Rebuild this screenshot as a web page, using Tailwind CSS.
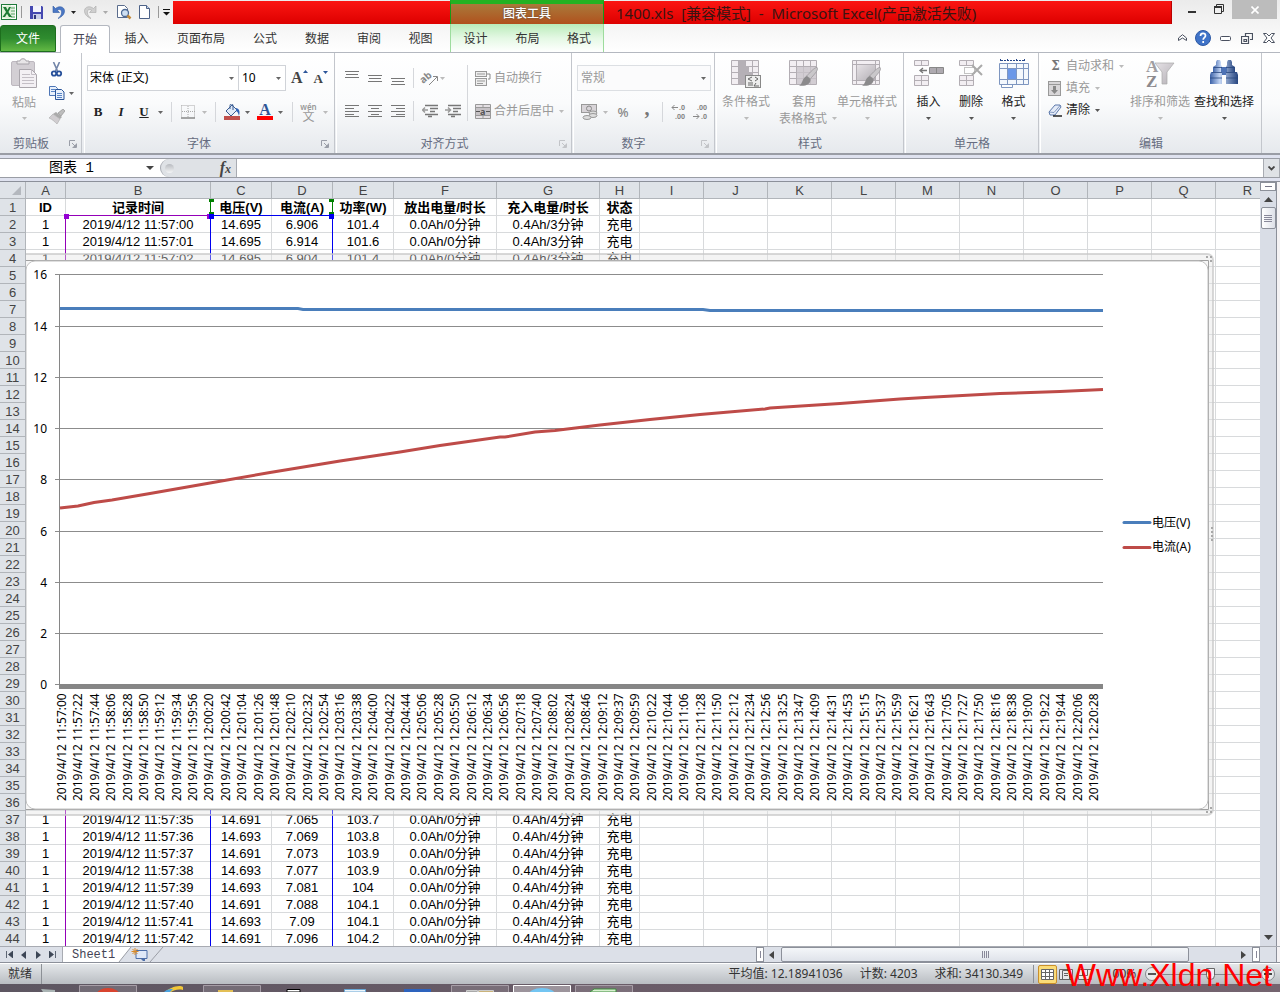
<!DOCTYPE html>
<html lang="zh-CN">
<head>
<meta charset="utf-8">
<title>1400.xls - Microsoft Excel</title>
<script src="https://cdn.jsdelivr.net/npm/@tailwindcss/browser@4"></script>
</head>
<body class="flex h-screen flex-col overflow-hidden bg-[#dfe2e8] font-['Noto_Sans','Noto_Sans_CJK_SC',sans-serif] text-[12px] leading-4 text-[#3b3b3b]">

<svg class="absolute size-0" aria-hidden="true">
  <defs>
    <linearGradient id="gGray" x1="0" y1="0" x2="1" y2="1"><stop offset="0" stop-color="#e6e2e6"/><stop offset="1" stop-color="#b4b0b6"/></linearGradient>
    <linearGradient id="gBin" x1="0" y1="0" x2="1" y2="0"><stop offset="0" stop-color="#3c62a8"/><stop offset=".35" stop-color="#c4d6f4"/><stop offset="1" stop-color="#26457f"/></linearGradient>
    <symbol id="caret" viewBox="0 0 5 3"><path d="M0 0h5L2.5 3z" fill="currentColor"/></symbol>
    <symbol id="launch" viewBox="0 0 8 8"><path d="M.5 6V.5H6" fill="none" stroke="currentColor"/><path d="M3 3l3 3M7.500 3.500v4h-4" stroke="currentColor" fill="none"/><path d="M7 4v3H4z" fill="currentColor"/></symbol>
    <symbol id="brush" viewBox="0 0 22 22"><path d="M20 1c2 3-4 8-7 12l-4-3C13 6 17 1 20 1z" fill="#c9c7ca" stroke="#98969a" stroke-width=".8"/><path d="M9 10l4 3c1 5-5 8-12 7 4-1 3-8 8-10z" fill="#8b8a8c"/></symbol>
  </defs>
</svg>

<!-- Title bar -->
<header class="flex h-[24px] shrink-0 bg-linear-to-b from-[#ebebeb] to-[#f4f4f4]">
  <div class="flex w-[173px] items-center">
    <svg class="ml-px size-4" viewBox="0 0 16 16"><rect x=".5" y=".5" width="15" height="15" fill="#fff" stroke="#1f7a3a"/><path d="M9 2h5v12H9z" fill="#e4f2e4"/><path d="M10 4h4M10 7h4M10 10h4M10 13h4" stroke="#5aa564"/><path d="M1 2l9-1v14l-9-1z" fill="#dff0d8"/><path d="M2 3h3l1.500 3L8 3h2L7.500 8 11 13H8L6 9.800 4 13H1.500L5 8z" fill="#1d7a34"/></svg>
    <span class="ml-[4px] h-3 w-px bg-[#999]"></span>
    <button aria-label="保存" class="ml-[7px]"><svg class="size-[15px]" viewBox="0 0 15 15"><path d="M1 1h12l1 1v12H1z" fill="#4448b0"/><path d="M4 1h8v6H4z" fill="#f3f4fb"/><path d="M4 9h8v5H4z" fill="#c9cfe8"/><path d="M5 10h2v4H5z" fill="#30367c"/></svg></button>
    <button aria-label="撤消" class="ml-[8px]"><svg class="h-[14px] w-[13px]" viewBox="0 0 13 14"><path d="M1 1v6.500h6.500L5.300 5.300C8 3.500 10 5 9.600 8c-.3 2-1.600 4-3.600 5.500C10 12 12.700 9 12.500 5.500 12 1.500 7 .5 3.500 3.500z" fill="#4a77c4" stroke="#2f5aa5" stroke-width=".6"/></svg></button>
    <svg class="ml-[6px] h-[3px] w-[5px] text-[#222]"><use href="#caret"/></svg>
    <button aria-label="恢复" class="ml-[8px]"><svg class="h-[14px] w-[13px]" viewBox="0 0 13 14"><path d="M12 1v6.500H5.500l2.200-2.200C5 3.500 3 5 3.400 8c.3 2 1.600 4 3.600 5.500C3 12 .3 9 .5 5.500 1 1.500 6 .5 9.500 3.500z" fill="#cfcfcf" stroke="#aaa" stroke-width=".6"/></svg></button>
    <svg class="ml-[6px] h-[3px] w-[5px] text-[#aaa]"><use href="#caret"/></svg>
    <button aria-label="打印预览" class="ml-[8px]"><svg class="size-[16px]" viewBox="0 0 16 16"><path d="M1.500 1.500h7l3 3v9h-10z" fill="#fff" stroke="#5a6c8c"/><circle cx="9" cy="9" r="3.500" fill="#cfe0f2" stroke="#4d6a95" stroke-width="1.300"/><path d="M11.500 11.500l3 3" stroke="#c28a3a" stroke-width="2.500"/></svg></button>
    <button aria-label="新建" class="ml-[7px]"><svg class="h-[14px] w-[11px]" viewBox="0 0 11 14"><path d="M.5.5h7l3 3v10H.5z" fill="#fff" stroke="#4d6288"/><path d="M7.500.5v3h3" fill="#c8d4e8" stroke="#4d6288"/></svg></button>
    <span class="ml-[8px] h-3 w-px bg-[#999]"></span>
    <button aria-label="自定义快速访问工具栏" class="ml-[4px]"><svg class="h-[7px] w-[7px]" viewBox="0 0 7 7"><path d="M0 .5h7" stroke="#111"/><path d="M0 3h7L3.500 6.500z" fill="#111"/></svg></button>
  </div>
  <div class="mt-px w-[277px] bg-linear-to-b from-[#fb1512] to-[#dd0000]"></div>
  <div class="flex w-[154px] items-center justify-center border-x border-[#179a17] border-t-4 border-t-[#22b222] bg-linear-to-b from-[#a8793a] to-[#b0501c] font-medium text-white [text-shadow:0_0_2px_#444]">图表工具</div>
  <h1 class="mt-px flex flex-1 items-center overflow-hidden whitespace-pre border-r border-[#b00] bg-linear-to-b from-[#fb1512] to-[#dd0000] pl-[12px] text-[15px] font-normal text-[#3a1412]">1400.xls  [兼容模式]  -  Microsoft Excel(产品激活失败)</h1>
  <div class="flex w-[108px]">
    <button aria-label="最小化" class="flex w-[34px] justify-center pt-[11px] pl-[6px]"><svg class="h-[2px] w-[8px]"><rect width="8" height="2" fill="#333"/></svg></button>
    <button aria-label="还原" class="flex w-[26px] justify-center pt-[4px]"><svg class="size-[10px]" viewBox="0 0 10 10"><path d="M2.500 2V.5h7v7H8M.5 2.500h7v7h-7z" fill="none" stroke="#333"/><path d="M0 3h8" stroke="#333" stroke-width="2"/></svg></button>
    <button aria-label="关闭" class="flex h-[19px] w-[45px] items-center justify-center bg-[#bcbcbc]"><svg class="size-[8px]" viewBox="0 0 8 8"><path d="M.5.5l7 7M7.500.5l-7 7" stroke="#fff" stroke-width="1.600"/></svg></button>
  </div>
</header>

<!-- Ribbon tabs -->
<nav class="flex h-[29px] shrink-0 items-end border-b border-[#b4b8c0] bg-linear-to-b from-[#f4f4f4] to-white text-[#333]">
  <button class="h-[27px] w-[56px] rounded-t-[3px] border border-[#1d6e1d] bg-linear-to-b from-[#247a28] via-[#2f8c2f] to-[#62b944] text-white">文件</button>
  <button class="-mb-px ml-[4px] h-[28px] w-[50px] rounded-t-[3px] border border-b-0 border-[#b4b8c0] bg-white text-[#445]">开始</button>
  <button class="h-[28px] w-[53px] pt-[2px]">插入</button>
  <button class="h-[28px] w-[76px] pt-[2px]">页面布局</button>
  <button class="h-[28px] w-[52px] pt-[2px]">公式</button>
  <button class="h-[28px] w-[52px] pt-[2px]">数据</button>
  <button class="h-[28px] w-[52px] pt-[2px]">审阅</button>
  <button class="h-[28px] w-[51px] pt-[2px]">视图</button>
  <div class="ml-[4px] flex h-[28px] w-[154px] border-x border-[#9ddc9d] bg-linear-to-b from-[#b9ebb9] via-[#e4f8e4] to-white pt-[2px]">
    <button class="w-[49px]">设计</button><button class="w-[55px]">布局</button><button class="w-[48px]">格式</button>
  </div>
  <div class="ml-auto flex h-[28px] items-center gap-[11px] pr-[5px] text-[#4a5160]">
    <button aria-label="功能区最小化"><svg class="h-[8px] w-[9px]" viewBox="0 0 9 8"><path d="M.5 4L4.500.7 8.500 4v2.500L4.500 4 .5 6.500z" fill="#fff" stroke="currentColor"/></svg></button>
    <button aria-label="帮助" class="-ml-[3px]"><svg class="size-4" viewBox="0 0 16 16"><circle cx="8" cy="8" r="7.500" fill="#3f73c8" stroke="#2d59a5"/><path d="M5.500 6c0-3.500 5-3.200 5-.3 0 2-2.300 1.800-2.300 4M8.200 11v2" stroke="#fff" stroke-width="1.700" fill="none"/></svg></button>
    <button aria-label="最小化窗口" class="-ml-[2px]"><svg class="h-[5px] w-[11px]" viewBox="0 0 11 5"><rect x=".5" y=".5" width="10" height="4" rx="1" fill="#fff" stroke="currentColor"/></svg></button>
    <button aria-label="还原窗口" class="-ml-px"><svg class="h-[11px] w-[12px]" viewBox="0 0 12 11"><path d="M4.500 3V.5h7v6H9M.5 3.500h7v7h-7zM3 6.500h2.500v2H3z" fill="none" stroke="currentColor" stroke-width="1.200"/></svg></button>
    <button aria-label="关闭窗口" class="-ml-px"><svg class="h-[10px] w-[12px]" viewBox="0 0 12 10"><path d="M.5.5h3L6 3 8.500.5h3L8 5l3.500 4.500h-3L6 7 3.500 9.500h-3L4 5z" fill="#fff" stroke="currentColor"/></svg></button>
  </div>
</nav>

<!-- Ribbon -->
<div class="flex h-[102px] shrink-0 border-b-2 border-[#9a9da5] bg-linear-to-b from-white via-[#fafbfc] to-[#e6e9ed] text-[#999]">

  <section class="flex w-[82px] flex-col border-r border-[#c3c6cc]">
    <div class="flex flex-1">
      <button class="ml-[8px] flex w-[32px] flex-col items-center pt-[5px]">
        <svg class="h-[32px] w-[28px]" viewBox="0 0 28 32"><rect x="1.500" y="3.500" width="23" height="24" rx="1.500" fill="#d3cfd4" stroke="#bdb8bf"/><path d="M7 6V3h3c0-3 6-3 6 0h3v3z" fill="#e8e6e8" stroke="#a8a4aa"/><path d="M9.500 11.500h12l5 5v13h-17z" fill="#f3f0f4" stroke="#aaa6ac"/><path d="M21.500 11.500v5h5M12 16.500h8M12 19.500h12M12 22.500h12M12 25.500h12" fill="none" stroke="#c4bfc6"/></svg>
        <span class="mt-px leading-[24px]">粘贴</span>
        <svg class="mt-[2px] h-[3px] w-[5px] text-[#bbb]"><use href="#caret"/></svg>
      </button>
      <div class="flex w-[36px] flex-col items-start gap-[9px] pt-[9px] pl-[9px]">
        <button aria-label="剪切"><svg class="h-[15px] w-[16px]" viewBox="0 0 16 15"><path d="M4.500 0l4 9M10.500 0l-4 9" stroke="#7285a8" stroke-width="1.600"/><circle cx="5" cy="11.500" r="2.200" fill="none" stroke="#27509a" stroke-width="1.800"/><circle cx="10" cy="11.500" r="2.200" fill="none" stroke="#27509a" stroke-width="1.800"/></svg></button>
        <button aria-label="复制" class="flex items-center gap-[4px]"><svg class="h-[14px] w-[16px]" viewBox="0 0 16 14"><path d="M.5.5h6l2 2v7h-8z" fill="#e8f0fb" stroke="#4e76b6"/><path d="M6.500 3.500h6l2.500 2.500v7.500H6.500z" fill="#e8f0fb" stroke="#2b5599"/><path d="M2 3.500h4M2 5.500h4M8 7.500h5M8 9.500h5M8 11.500h5" stroke="#5a85c6"/></svg><svg class="h-[3px] w-[5px] text-[#666]"><use href="#caret"/></svg></button>
        <button aria-label="格式刷"><svg class="h-[15px] w-[16px]" viewBox="0 0 16 15"><path d="M14 0l2 2-4 5-3-3z" fill="#bdbdbd" stroke="#888" stroke-width=".6"/><path d="M7 3l6 5-2 2-7-5z" fill="#aaa"/><path d="M4 5l7 5-3 5c-2-2-5-5-8-6z" fill="#d0cdd0" stroke="#aaa" stroke-width=".6"/></svg></button>
      </div>
    </div>
    <div class="flex h-[21px] items-center pt-[2px] text-[#666c80]"><span class="w-[62px] text-center">剪贴板</span><svg class="ml-[7px] size-[8px] text-[#9a9ea8]"><use href="#launch"/></svg></div>
  </section>

  <section class="ml-[2px] flex w-[251px] flex-col border-r border-l border-r-[#c3c6cc] border-l-white pl-[2px]">
    <div class="flex flex-1 flex-col">
      <div class="mt-[12px] flex h-[26px]">
        <label class="relative w-[152px]"><select aria-label="字体" class="h-full w-full appearance-none border border-[#d0d3d8] bg-white pl-[2px] text-black"><option>宋体 (正文)</option></select><svg class="absolute top-[12px] right-[5px] h-[3px] w-[5px] text-[#666]"><use href="#caret"/></svg></label>
        <label class="relative w-[47px]"><select aria-label="字号" class="h-full w-full appearance-none border border-l-0 border-[#d0d3d8] bg-white pl-[3px] text-black"><option>10</option></select><svg class="absolute top-[12px] right-[5px] h-[3px] w-[5px] text-[#666]"><use href="#caret"/></svg></label>
        <button class="ml-[5px] flex font-['Liberation_Serif',serif] text-[16px] leading-[25px] font-bold text-[#444]">A<svg class="mt-[5px] h-[3px] w-[5px]" viewBox="0 0 5 3"><path d="M0 3h5L2.500 0z" fill="#2b5599"/></svg></button>
        <button class="ml-[6px] flex font-['Liberation_Serif',serif] text-[13px] leading-[27px] font-bold text-[#444]">A<svg class="mt-[6px] h-[3px] w-[5px] text-[#2b5599]"><use href="#caret"/></svg></button>
      </div>
      <div class="mt-[8px] flex h-[26px] items-center text-[#666]">
        <button class="w-[22px] font-['Liberation_Serif',serif] text-[13px] font-black text-[#222]">B</button>
        <button class="w-[24px] font-['Liberation_Serif',serif] text-[13px] font-bold text-[#222] italic">I</button>
        <button class="w-[22px] font-['Liberation_Serif',serif] text-[13px] font-bold text-[#222] underline">U</button>
        <svg class="ml-[3px] h-[3px] w-[5px]"><use href="#caret"/></svg>
        <span class="ml-[8px] h-[20px] w-px bg-[#d5d7db]"></span>
        <button aria-label="边框" class="ml-[9px]"><svg class="size-[14px]" viewBox="0 0 14 14"><path d="M.5.5h13v12M.5.5v12M7 1v12M1 6.500h13" fill="none" stroke="#aaa" stroke-dasharray="1 1"/><path d="M0 13h14" stroke="#888" stroke-width="1.500"/></svg></button>
        <svg class="ml-[7px] h-[3px] w-[5px] text-[#bbb]"><use href="#caret"/></svg>
        <span class="ml-[8px] h-[20px] w-px bg-[#d5d7db]"></span>
        <button aria-label="填充颜色" class="ml-[8px]"><svg class="size-[16px]" viewBox="0 0 16 16"><path d="M2 7l6-6 5 5-6 6z" fill="#dfeaf8" stroke="#3b5c92"/><path d="M6 5V1.500a1.500 1.500 0 013 0V6" fill="none" stroke="#3b5c92"/><path d="M12 4c4 1 4 4 3 8-1-3-1-4-3-5z" fill="#2f62b5"/><path d="M0 12h16v4H0z" fill="#c0504d"/></svg></button>
        <svg class="ml-[5px] h-[3px] w-[5px]"><use href="#caret"/></svg>
        <button aria-label="字体颜色" class="ml-[7px] flex w-[16px] flex-col items-center font-['Liberation_Serif',serif] text-[16px] leading-[12px] font-bold text-[#2f5597]">A<span class="h-[4px] w-full bg-[#f00]"></span></button>
        <svg class="ml-[5px] h-[3px] w-[5px]"><use href="#caret"/></svg>
        <span class="ml-[9px] h-[20px] w-px bg-[#d5d7db]"></span>
        <button class="ml-[7px] flex w-[17px] flex-col items-center text-[#999]"><span class="text-[8px] leading-[9px] font-semibold">wén</span><span class="text-[12px] leading-[12px]">文</span></button>
        <svg class="ml-[6px] h-[3px] w-[5px] text-[#bbb]"><use href="#caret"/></svg>
      </div>
    </div>
    <div class="flex h-[21px] items-center pt-[2px] text-[#666c80]"><span class="w-[224px] text-center">字体</span><svg class="ml-[10px] size-[8px] text-[#9a9ea8]"><use href="#launch"/></svg></div>
  </section>

  <section class="ml-px flex w-[236px] flex-col border-r border-l border-r-[#c3c6cc] border-l-white pl-[8px]">
    <div class="flex flex-1">
      <div class="flex flex-col gap-[7px] pt-[12px]">
        <div class="flex h-[26px] items-center text-[#777]">
          <button aria-label="顶端对齐" class="mb-[6px]"><svg class="h-[9px] w-[14px]" viewBox="0 0 14 9"><path d="M0 .5h14M1 3.500h12M0 6.500h14" stroke="currentColor" stroke-width="1.200"/></svg></button>
          <button aria-label="垂直居中" class="mt-px ml-[9px]"><svg class="h-[9px] w-[14px]" viewBox="0 0 14 9"><path d="M0 1.500h14M1 4.500h12M0 7.500h14" stroke="currentColor" stroke-width="1.200"/></svg></button>
          <button aria-label="底端对齐" class="mt-[7px] ml-[9px]"><svg class="h-[9px] w-[14px]" viewBox="0 0 14 9"><path d="M0 1.500h14M1 4.500h12M0 7.500h14" stroke="currentColor" stroke-width="1.200"/></svg></button>
          <span class="ml-[8px] h-[20px] w-px bg-[#d5d7db]"></span>
          <button aria-label="方向" class="ml-[8px]"><svg class="h-[16px] w-[16px] overflow-visible" viewBox="0 0 16 16"><text x="0" y="13" font-size="10" font-weight="bold" fill="#888" transform="rotate(-40 2 12)">ab</text><path d="M7 15l8-8M15.500 11V6.500H11" stroke="#888" fill="none"/></svg></button>
          <svg class="ml-[2px] h-[3px] w-[5px] text-[#bbb]"><use href="#caret"/></svg>
        </div>
        <div class="flex h-[26px] items-center text-[#777]">
          <button aria-label="左对齐"><svg class="h-[12px] w-[14px]" viewBox="0 0 14 12"><path d="M0 .5h14M0 3.500h9M0 6.500h14M0 9.500h9M0 11.500h14" stroke="currentColor" stroke-width="1.200"/></svg></button>
          <button aria-label="居中" class="ml-[9px]"><svg class="h-[12px] w-[14px]" viewBox="0 0 14 12"><path d="M0 .5h14M3 3.500h8M0 6.500h14M3 9.500h8M0 11.500h14" stroke="currentColor" stroke-width="1.200"/></svg></button>
          <button aria-label="右对齐" class="ml-[9px]"><svg class="h-[12px] w-[14px]" viewBox="0 0 14 12"><path d="M0 .5h14M5 3.500h9M0 6.500h14M5 9.500h9M0 11.500h14" stroke="currentColor" stroke-width="1.200"/></svg></button>
          <span class="ml-[8px] h-[20px] w-px bg-[#d5d7db]"></span>
          <button aria-label="减少缩进量" class="ml-[8px]"><svg class="h-[14px] w-[16px]" viewBox="0 0 16 14"><path d="M3 1.500h13M8 4.500h8M8 7.500h5M3 10.500h13M6 12.500h4" stroke="currentColor" stroke-width="1.500"/><path d="M6 6H1M3 3.500L.5 6 3 8.500" stroke="#999" fill="none" stroke-width="1.500"/></svg></button>
          <button aria-label="增加缩进量" class="ml-[7px]"><svg class="h-[14px] w-[16px]" viewBox="0 0 16 14"><path d="M3 1.500h13M8 4.500h8M8 7.500h5M3 10.500h13M6 12.500h4" stroke="currentColor" stroke-width="1.500"/><path d="M0 6h5M3 3.500L5.500 6 3 8.500" stroke="#999" fill="none" stroke-width="1.500"/></svg></button>
        </div>
      </div>
      <span class="mt-[12px] ml-[6px] h-[56px] w-px bg-[#d5d7db]"></span>
      <div class="flex flex-col gap-[7px] pt-[12px] pl-[7px]">
        <button class="flex h-[26px] items-center"><svg class="h-[15px] w-[16px]" viewBox="0 0 16 15"><rect x=".5" y=".5" width="11" height="5" fill="#eee" stroke="#999"/><rect x=".5" y="7.500" width="11" height="7" fill="#eee" stroke="#999"/><path d="M2 3h8M2 10h8M2 12.500h6" stroke="#999"/><path d="M12 3h3v5h-2" fill="none" stroke="#888"/></svg><span class="ml-[3px]">自动换行</span></button>
        <button class="flex h-[26px] items-center"><svg class="h-[15px] w-[16px]" viewBox="0 0 16 15"><path d="M.5.5h15v14H.5zM8 .5V4M8 11v3.500M.5 3.500h15M.5 11.500h15" fill="#e4e0e4" stroke="#999"/><path d="M1 4h14v7H1z" fill="#c6c2c6"/><path d="M1 7.500h4M11 7.500h4" stroke="#555"/><text x="5" y="10.500" font-size="9" font-weight="bold" fill="#555">a</text></svg><span class="ml-[3px]">合并后居中</span><svg class="ml-[5px] h-[3px] w-[5px] text-[#bbb]"><use href="#caret"/></svg></button>
      </div>
    </div>
    <div class="flex h-[21px] items-center pt-[2px] text-[#666c80]"><span class="w-[199px] text-center">对齐方式</span><svg class="ml-[15px] size-[8px] text-[#c2c4c8]"><use href="#launch"/></svg></div>
  </section>

  <section class="ml-px flex w-[142px] flex-col border-r border-l border-r-[#c3c6cc] border-l-white pl-[3px]">
    <div class="flex flex-1 flex-col">
      <label class="relative mt-[12px] block h-[26px] w-[134px]"><select aria-label="数字格式" class="h-full w-full appearance-none border border-[#dcdfe3] bg-[#fbfbfc] pl-[3px] text-[#999]"><option>常规</option></select><svg class="absolute top-[12px] right-[5px] h-[3px] w-[5px] text-[#666]"><use href="#caret"/></svg></label>
      <div class="mt-[8px] flex h-[26px] items-center">
        <button aria-label="会计数字格式" class="ml-[4px]"><svg class="h-[16px] w-[17px]" viewBox="0 0 17 16"><rect x=".5" y=".5" width="15" height="8" fill="#d8d4d8" stroke="#999"/><circle cx="8" cy="4.500" r="2.500" fill="none" stroke="#888"/><ellipse cx="12" cy="9" rx="4" ry="2" fill="#ddd" stroke="#999"/><ellipse cx="12" cy="11.500" rx="4" ry="2" fill="#ddd" stroke="#999"/><ellipse cx="6" cy="13.500" rx="4" ry="2" fill="#ddd" stroke="#999"/></svg></button>
        <svg class="ml-[5px] h-[3px] w-[5px] text-[#bbb]"><use href="#caret"/></svg>
        <button class="ml-[8px] w-[14px] text-[13px] font-medium text-[#888]">%</button>
        <button class="ml-[10px] w-[14px] pb-[9px] font-['Liberation_Serif',serif] text-[20px] leading-4 font-bold text-[#777]">,</button>
        <span class="ml-[8px] h-[20px] w-px bg-[#d5d7db]"></span>
        <button aria-label="增加小数位数" class="ml-[8px]"><svg class="h-[20px] w-[16px] overflow-visible" viewBox="0 0 16 20" font-size="7" font-weight="bold" fill="#888"><path d="M7 5.500H1M3.500 3L1 5.500 3.500 8" stroke="#888" fill="none"/><text x="8" y="8">.0</text><text x="4" y="17">.00</text></svg></button>
        <button aria-label="减少小数位数" class="ml-[6px]"><svg class="h-[20px] w-[16px] overflow-visible" viewBox="0 0 16 20" font-size="7" font-weight="bold" fill="#888"><text x="4" y="8">.00</text><path d="M0 14.500h6M3.500 12L6 14.500 3.500 17" stroke="#888" fill="none"/><text x="8" y="17">.0</text></svg></button>
      </div>
    </div>
    <div class="flex h-[21px] items-center pt-[2px] text-[#666c80]"><span class="w-[113px] text-center">数字</span><svg class="ml-[11px] size-[8px] text-[#c2c4c8]"><use href="#launch"/></svg></div>
  </section>

  <section class="ml-px flex w-[188px] flex-col border-r border-l border-r-[#c3c6cc] border-l-white">
    <div class="flex flex-1">
      <button class="flex w-[58px] flex-col items-center pt-[6px]">
        <svg class="h-[30px] w-[32px]" viewBox="0 0 32 30"><path d="M1.500 1.500h27v24h-27zM8.500 1.500v24M15.500 1.500v24M22.500 1.500v24M1.500 7.500h27M1.500 13.500h27M1.500 19.500h27" fill="#f2eef2" stroke="#b3aeb4"/><path d="M9 1h6v6h4v6h3v6h-5v6H9z" fill="#b5b0b6"/><rect x="15.500" y="16.500" width="15" height="12" fill="#eee" stroke="#888"/><path d="M22 18l-4 2 4 2M18 24h5M18 26h5M25 18l3 2-3 2M26 24l-2 3M24 27h5" stroke="#666" fill="none"/></svg>
        <span class="mt-[6px] leading-[14px] whitespace-nowrap">条件格式</span><svg class="mt-[8px] h-[3px] w-[5px] text-[#bbb]"><use href="#caret"/></svg>
      </button>
      <button class="flex w-[58px] flex-col items-center pt-[6px]">
        <svg class="h-[30px] w-[32px]" viewBox="0 0 32 30"><path d="M1.500 1.500h27v24h-27zM8.500 1.500v24M15.500 1.500v24M22.500 1.500v24M1.500 7.500h27M1.500 13.500h27M1.500 19.500h27" fill="#f2eef2" stroke="#b3aeb4"/><path d="M9 8h19v17H9z" fill="#c9c4ca" opacity=".8"/><use href="#brush" x="10" y="7" width="21" height="22"/></svg>
        <span class="mt-[6px] leading-[14px]">套用</span><span class="flex items-center gap-[5px] pl-[8px] leading-[19px] whitespace-nowrap">表格格式<svg class="h-[3px] w-[5px] text-[#bbb]"><use href="#caret"/></svg></span>
      </button>
      <button class="flex w-[68px] flex-col items-center pt-[6px]">
        <svg class="h-[30px] w-[32px]" viewBox="0 0 32 30"><path d="M1.500 1.500h27v24h-27zM5.500 1.500v24M24.500 1.500v24M1.500 5.500h27M1.500 21.500h27" fill="#f2eef2" stroke="#b3aeb4"/><path d="M6 6h18v15H6z" fill="url(#gGray)"/><use href="#brush" x="10" y="7" width="21" height="22"/></svg>
        <span class="mt-[6px] leading-[14px] whitespace-nowrap">单元格样式</span><svg class="mt-[8px] h-[3px] w-[5px] text-[#bbb]"><use href="#caret"/></svg>
      </button>
    </div>
    <div class="flex h-[21px] items-center justify-center pt-[2px] text-[#666c80]">样式</div>
  </section>

  <section class="ml-px flex w-[134px] flex-col border-r border-l border-r-[#c3c6cc] border-l-white text-[#222]">
    <div class="flex flex-1 pl-px">
      <button class="flex w-[43px] flex-col items-center pt-[6px]">
        <svg class="h-[30px] w-[32px]" viewBox="0 0 32 30"><path d="M1.500 1.500h14v5h-14zM8.500 1.500v5M1.500 16.500h14v10h-14zM8.500 16.500v10M1.500 21.500h14" fill="#f2eef2" stroke="#b3aeb4"/><path d="M16.500 8.500h14v6h-14zM23.500 8.500v6" fill="#aeaab0" stroke="#888"/><path d="M14 11.500H7M10 9l-3 2.500 3 2.500" fill="none" stroke="#777" stroke-width="1.300"/></svg>
        <span class="mt-[6px] leading-[14px]">插入</span><svg class="mt-[8px] h-[3px] w-[5px] text-[#555]"><use href="#caret"/></svg>
      </button>
      <button class="flex w-[42px] flex-col items-center pt-[6px]">
        <svg class="h-[30px] w-[32px]" viewBox="0 0 32 30"><path d="M4.500 1.500h14v5h-14zM11.500 1.500v5M4.500 16.500h14v10h-14zM11.500 16.500v10M4.500 21.500h14" fill="#f2eef2" stroke="#b3aeb4"/><path d="M9.500 8.500h10v6h-10z" fill="none" stroke="#888" stroke-dasharray="1 1"/><path d="M17 6l10 10M27 6L17 16" stroke="#aaa" stroke-width="2"/></svg>
        <span class="mt-[6px] leading-[14px]">删除</span><svg class="mt-[8px] h-[3px] w-[5px] text-[#555]"><use href="#caret"/></svg>
      </button>
      <button class="flex w-[43px] flex-col items-center pt-[5px]">
        <svg class="h-[31px] w-[32px]" viewBox="0 0 32 31"><path d="M2.500 1v3M26.500 1v3M3 2.500h23M9.500 1v3M18.500 1v3" stroke="#24468a" stroke-dasharray="2 1"/><path d="M1.500 5.500h29v21h-29zM9.500 5.500v21M18.500 5.500v21M25.500 5.500v21M1.500 10.500h29M1.500 21.500h29" fill="#f4f8fd" stroke="#7e96c0"/><path d="M10 11h8v10h-8z" fill="#6a97e8"/><path d="M3.500 27v2.500h11V27" fill="#fff" stroke="#7e96c0"/></svg>
        <span class="mt-[6px] leading-[14px]">格式</span><svg class="mt-[8px] h-[3px] w-[5px] text-[#555]"><use href="#caret"/></svg>
      </button>
    </div>
    <div class="flex h-[21px] items-center justify-center pt-[2px] text-[#666c80]">单元格</div>
  </section>

  <section class="ml-px flex w-[222px] flex-col border-r border-l border-r-[#c3c6cc] border-l-white">
    <div class="flex flex-1">
      <div class="flex w-[88px] flex-col items-start pt-[2px] pl-[7px]">
        <button class="flex h-[22px] items-center"><span class="w-[15px] font-['DejaVu_Serif',serif] text-[12px] font-bold text-[#777]">Σ</span><span class="ml-[3px]">自动求和</span><svg class="ml-[5px] h-[3px] w-[5px] text-[#bbb]"><use href="#caret"/></svg></button>
        <button class="flex h-[22px] items-center"><svg class="h-[15px] w-[13px]" viewBox="0 0 13 15"><rect x=".5" y=".5" width="12" height="14" fill="#d8d6d8" stroke="#999"/><path d="M1 3.500h11" stroke="#999"/><path d="M5 5h3v4h2l-3.500 4L3 9h2z" fill="#888"/></svg><span class="ml-[5px]">填充</span><svg class="ml-[5px] h-[3px] w-[5px] text-[#bbb]"><use href="#caret"/></svg></button>
        <button class="flex h-[22px] items-center text-[#222]"><svg class="h-[13px] w-[14px]" viewBox="0 0 14 13"><path d="M1 8l6-7h5l1 2-6 8H2z" fill="#e4ebf8" stroke="#5c79ab"/><path d="M1 8l5 .5L12.500 1" fill="none" stroke="#5c79ab" stroke-width=".7"/><path d="M5 12h9" stroke="#000" stroke-width="1.300"/></svg><span class="ml-[4px]">清除</span><svg class="ml-[5px] h-[3px] w-[5px] text-[#555]"><use href="#caret"/></svg></button>
      </div>
      <button class="flex w-[62px] flex-col items-center pt-[5px]">
        <svg class="h-[31px] w-[30px]" viewBox="0 0 30 31"><path d="M10 5h19l-7 9v12h-5V14z" fill="url(#gGray)" stroke="#aaa" stroke-width=".7"/><text x="1" y="14" font-family="Liberation Serif" font-size="17" font-weight="bold" fill="#a09ea2">A</text><text x="1" y="29" font-family="Liberation Serif" font-size="17" font-weight="bold" fill="#8c8a8e">Z</text></svg>
        <span class="mt-[6px] leading-[14px] whitespace-nowrap">排序和筛选</span><svg class="mt-[8px] h-[3px] w-[5px] text-[#bbb]"><use href="#caret"/></svg>
      </button>
      <button class="flex w-[66px] flex-col items-center pt-[5px] text-[#222]">
        <svg class="h-[31px] w-[30px]" viewBox="0 0 30 31"><path d="M7 4l1-2h3l1 2v3l1 2v5H4V9l3-2zM18 4l1-2h3l1 2v3l3 2v5h-9V9l1-2z" fill="url(#gBin)"/><path d="M12 9h6v8h-6z" fill="#4d72b5"/><path d="M2 14h11v12H1V17zM17 14h11l1 3v9H17z" fill="url(#gBin)"/><path d="M1 20h12M17 20h12M5 9.500h8M17 9.500h8M3 14.500h10M17 14.500h10" stroke="#27467f" stroke-width=".8"/></svg>
        <span class="mt-[6px] leading-[14px] whitespace-nowrap">查找和选择</span><svg class="mt-[8px] h-[3px] w-[5px] text-[#555]"><use href="#caret"/></svg>
      </button>
    </div>
    <div class="flex h-[21px] items-center justify-center pt-[2px] text-[#666c80]">编辑</div>
  </section>
</div>

<!-- Formula bar -->
<div class="shrink-0 border-b border-[#8c909a] bg-[#dfe2ef] pt-[3px] pb-[3px]">
  <div class="flex h-[20px] border-y border-[#9a9da5] bg-white">
    <input aria-label="名称框" value="图表 1" class="w-[146px] pl-[49px] font-['Liberation_Mono','Noto_Sans_CJK_SC',monospace] text-[14px] text-black outline-none">
    <button aria-label="名称列表" class="w-[14px]"><svg class="h-[4px] w-[8px] text-[#444]" viewBox="0 0 8 4"><path d="M0 0h8L4 4z" fill="currentColor"/></svg></button>
    <div class="flex w-[77px] items-center justify-between rounded-l-full border-r border-l border-[#a8abb2] bg-[#dfe2e6] pr-[5px] pl-[4px]">
      <span class="size-[9px] rounded-full bg-linear-to-b from-[#b8bbc0] to-[#f4f5f6]"></span>
      <button class="font-['Liberation_Serif',serif] text-[16px] font-bold text-[#444] italic">f<span class="text-[12px]">x</span></button>
    </div>
    <input aria-label="编辑栏" class="min-w-0 flex-1 outline-none">
    <button aria-label="展开编辑栏" class="flex w-[17px] items-center justify-center border border-y-0 border-[#a8abb2] bg-[#dfe2e6]"><svg class="h-[5px] w-[7px]" viewBox="0 0 7 5"><path d="M.5.5L3.500 3.500 6.500.5" fill="none" stroke="#444" stroke-width="1.800"/></svg></button>
  </div>
</div>

<!-- Worksheet -->
<main class="flex min-h-0 flex-1">
  <div class="relative min-w-0 flex-1 overflow-hidden bg-white">
    <table class="w-[1280px] table-fixed border-separate border-spacing-0 text-center font-['Liberation_Sans','Noto_Sans_CJK_SC',sans-serif] text-[13px] leading-[15px] text-black">
      <colgroup>
        <col class="w-[26px]"><col class="w-[40px]"><col class="w-[145px]"><col class="w-[61px]"><col class="w-[61px]"><col class="w-[61px]"><col class="w-[103px]"><col class="w-[103px]"><col class="w-[40px]">
        <col class="w-[64px]"><col class="w-[64px]"><col class="w-[64px]"><col class="w-[64px]"><col class="w-[64px]"><col class="w-[64px]"><col class="w-[64px]"><col class="w-[64px]"><col class="w-[64px]"><col class="w-[64px]">
      </colgroup>
      <thead><tr id="letters"></tr></thead>
      <tbody id="rows"></tbody>
    </table>

    <!-- Source ranges of the chart -->
    <svg class="absolute top-0 left-0 h-full w-[340px]" aria-hidden="true">
      <path d="M65.500 34V764M65 33.500H210" stroke="#9400b8" fill="none"/>
      <path d="M210.500 34V764M332.500 34V764M210 33.500H332" stroke="#0000f0" fill="none"/>
      <path d="M210.500 18V32M332.500 18V32" stroke="#008000" fill="none"/>
      <path d="M209 17h5v3h-5zM329 17h5v3h-5zM209 30h5v2h-5zM329 30h5v2h-5z" fill="#008000"/>
      <path d="M64 32h5v5h-5zM207 32h5v5h-5z" fill="#9400d3"/>
      <path d="M209 32h5v5h-5zM329 32h5v5h-5z" fill="#0000f0"/>
    </svg>

    <!-- Chart object -->
    <svg id="chart" class="absolute top-[71px] left-[26px] h-[564px] w-[1190px] font-['Noto_Sans','Noto_Sans_CJK_SC',sans-serif] text-[12px]" viewBox="26 253 1190 564">
      <rect x="16" y="254" width="1197" height="561" rx="6" fill="#e4e4e4" fill-opacity=".4" stroke="#c8c8c8" stroke-opacity=".7" stroke-width="2"/>
      <path d="M26 260.500H1208.500V809.500H26" fill="#f6f6f6" stroke="#a0a0a0"/>
      <rect x="26" y="261" width="1182" height="548" rx="9" fill="#fff" stroke="#c0c0c0"/>
      <g fill="#a8a8a8"><path d="M1206 256h2v2h-2zM1210 256h2v2h-2zM1210 260h2v2h-2zM1206 811h2v2h-2zM1210 811h2v2h-2zM1210 807h2v2h-2zM1211 527h2v2h-2zM1211 531h2v2h-2zM1211 535h2v2h-2zM1211 539h2v2h-2z"/></g>
      <path id="gridlines" stroke="#8c8c8c" fill="none"/>
      <path d="M59.500 275V688" stroke="#868686"/>
      <path d="M59 686.500H1103" stroke="#868686" stroke-width="5"/>
      <path d="M60 308.500H298L303 309.500H703L710 310.500H1103" fill="none" stroke="#4a7ebb" stroke-width="3"/>
      <path d="M60 508L78 506 94 502.500 112 500 150 493.500 210 483 270 472.500 340 461 400 452 440 445.500 500 437 505 437 535 432 555 430.500 600 425 650 419.500 700 414.500 765 409 770 408 840 403.500 900 399 925 397.500 1000 393.500 1060 391.500 1103 389.500" fill="none" stroke="#be4b48" stroke-width="3"/>
      <path d="M1124 522.500H1150" stroke="#4a7ebb" stroke-width="3" stroke-linecap="round"/>
      <path d="M1124 547.500H1150" stroke="#be4b48" stroke-width="3" stroke-linecap="round"/>
      <text x="1152" y="527">电压(V)</text>
      <text x="1152" y="551">电流(A)</text>
    </svg>
  </div>

  <div class="flex w-[17px] shrink-0 flex-col items-center border-r border-[#8c909a] bg-[#d9dde6]">
    <span class="flex h-[9px] w-full items-center justify-center border border-[#8c909a] bg-white"><span class="h-px w-[7px] bg-[#778]"></span></span>
    <button aria-label="向上滚动" class="flex h-[16px] items-center"><svg class="h-[5px] w-[9px]" viewBox="0 0 9 5"><path d="M0 5h9L4.500 0z" fill="#444"/></svg></button>
    <div class="flex h-[22px] w-[15px] flex-col items-center justify-center gap-px rounded-[2px] border border-[#8c909a] bg-linear-to-r from-white to-[#dde0e8]"><span class="h-px w-[8px] bg-[#889]"></span><span class="h-px w-[8px] bg-[#889]"></span><span class="h-px w-[8px] bg-[#889]"></span><span class="h-px w-[8px] bg-[#889]"></span></div>
    <button aria-label="向下滚动" class="mt-auto flex h-[17px] items-center"><svg class="h-[5px] w-[9px]" viewBox="0 0 9 5"><path d="M0 0h9L4.500 5z" fill="#444"/></svg></button>
  </div>
  <div class="w-[3px] shrink-0 bg-[#f4f2f4]"></div>
</main>

<!-- Sheet tabs and horizontal scroll bar -->
<div class="flex h-[17px] shrink-0 border-y border-t-[#a8abb2] border-b-[#8c909a] bg-[#dce0e8]">
  <div class="flex w-[63px] items-center border-r border-[#a8abb2] pl-[6px] text-[#3d4656]">
    <button aria-label="第一张" class="w-[15px]"><svg class="h-[7px] w-[7px]" viewBox="0 0 7 7"><path d="M.5 0v7M7 0v7L2.500 3.500z" fill="currentColor" stroke="currentColor" stroke-width=".8"/></svg></button>
    <button aria-label="上一张" class="w-[15px]"><svg class="h-[8px] w-[5px]" viewBox="0 0 5 8"><path d="M5 0v8L0 4z" fill="currentColor"/></svg></button>
    <button aria-label="下一张" class="w-[13px]"><svg class="h-[8px] w-[5px]" viewBox="0 0 5 8"><path d="M0 0v8l5-4z" fill="currentColor"/></svg></button>
    <button aria-label="最后一张"><svg class="h-[7px] w-[7px]" viewBox="0 0 7 7"><path d="M6.500 0v7M0 0v7l4.500-3.500z" fill="currentColor" stroke="currentColor" stroke-width=".8"/></svg></button>
  </div>
  <button class="flex items-center bg-white pl-[9px] font-['Liberation_Mono',monospace] text-[12px] text-[#445]">Sheet1</button>
  <svg class="h-[15px] w-[60px]" viewBox="0 0 60 15"><path d="M0 0H16L4 15H0z" fill="#fff"/><path d="M16 0L4 15M48 0L35 15" stroke="#9a9da5" fill="none"/><path d="M21 3.500h11v8h-11z" fill="#dfe8f8" stroke="#4d6ea8"/><path d="M26 12h4v2h-2z" fill="#4d6ea8"/><path d="M20 1v7M16.500 4.500h7M17.500 2l5 5M22.500 2l-5 5" stroke="#d98a28"/></svg>
  <div class="ml-auto flex h-[15px] w-[504px] items-center">
    <span class="flex h-full w-[8px] items-center justify-center border border-[#8c909a] bg-white"><span class="h-[7px] w-px bg-[#889]"></span></span>
    <button aria-label="向左滚动" class="ml-[5px] w-[5px]"><svg class="h-[8px] w-[5px]" viewBox="0 0 5 8"><path d="M5 0v8L0 4z" fill="#444"/></svg></button>
    <div class="ml-[7px] flex h-full w-[408px] items-center justify-center gap-px rounded-[2px] border border-[#8c909a] bg-linear-to-b from-[#f4f6f9] to-[#dfe3ea]"><span class="h-[7px] w-px bg-[#889]"></span><span class="h-[7px] w-px bg-[#889]"></span><span class="h-[7px] w-px bg-[#889]"></span><span class="h-[7px] w-px bg-[#889]"></span></div>
    <button aria-label="向右滚动" class="ml-auto w-[5px]"><svg class="h-[8px] w-[5px]" viewBox="0 0 5 8"><path d="M0 0v8l5-4z" fill="#444"/></svg></button>
    <span class="ml-[6px] flex h-full w-[8px] items-center justify-center border border-[#8c909a] bg-white"><span class="h-[7px] w-px bg-[#889]"></span></span>
  </div>
  <span class="w-[17px] border-r border-[#8c909a]"></span><span class="w-[3px] bg-[#f4f2f4]"></span>
</div>

<!-- Status bar -->
<footer class="relative flex h-[21px] shrink-0 items-center border-t border-white bg-linear-to-b from-[#e4e7ea] to-[#b9bdc2] text-[#333]">
  <span class="pl-[8px]">就绪</span>
  <span class="ml-[9px] h-full w-px bg-[#8c9096]"></span>
  <span class="ml-auto">平均值: 12.18941036</span>
  <span class="ml-[17px]">计数: 4203</span>
  <span class="ml-[17px]">求和: 34130.349</span>
  <span class="ml-[10px] h-[18px] w-px bg-[#8c9096]"></span>
  <button aria-label="普通" class="ml-[4px] flex size-[19px] items-center justify-center rounded-[2px] border border-[#c98f2c] bg-[#fbdc78]"><svg class="h-[11px] w-[13px]" viewBox="0 0 13 11"><path d="M.5.5h12v10H.5zM4.500.5v10M8.500.5v10M.5 3.500h12M.5 7.500h12" fill="#fff" stroke="#666"/></svg></button>
  <button aria-label="页面布局视图" class="ml-[2px]"><svg class="h-[11px] w-[14px]" viewBox="0 0 14 11"><path d="M.5.5h13v10H.5zM3.500 1.500h7v9h-7zM5 4.500h4M5 6.500h4" fill="#e8eaec" stroke="#666"/></svg></button>
  <button aria-label="分页预览" class="ml-[5px]"><svg class="h-[11px] w-[14px]" viewBox="0 0 14 11"><path d="M.5.5h13v10H.5zM4.500.5v6M9.500.5v6M.5 6.500h9" fill="#e8eaec" stroke="#666"/></svg></button>
  <button class="ml-[13px] w-[32px]">100%</button>
  <button aria-label="缩小" class="ml-[7px]"><svg class="size-4" viewBox="0 0 16 16"><circle cx="8" cy="8" r="6.500" fill="#e8eaec" stroke="#85898f"/><path d="M4 8h8" stroke="#444" stroke-width="1.800"/></svg></button>
  <input type="range" aria-label="显示比例" min="10" max="190" value="100" class="h-[14px] w-[100px] appearance-none bg-linear-to-b from-[#85898f] to-[#85898f] bg-[length:100%_1px] bg-center bg-no-repeat [&::-webkit-slider-thumb]:h-[12px] [&::-webkit-slider-thumb]:w-[9px] [&::-webkit-slider-thumb]:appearance-none [&::-webkit-slider-thumb]:rounded-b-full [&::-webkit-slider-thumb]:border [&::-webkit-slider-thumb]:border-[#666] [&::-webkit-slider-thumb]:bg-[#f0f1f3]">
  <button aria-label="放大" class="mr-[4px]"><svg class="size-4" viewBox="0 0 16 16"><circle cx="8" cy="8" r="6.500" fill="#e8eaec" stroke="#85898f"/><path d="M4 8h8M8 4v8" stroke="#444" stroke-width="1.800"/></svg></button>
  <span class="absolute right-[8px] -bottom-[7px] font-['Liberation_Sans',sans-serif] text-[32px] leading-[32px] text-[#f00]">Www.Xldn.Net</span>
</footer>

<!-- Task bar -->
<div class="h-[8px] shrink-0 overflow-hidden bg-linear-to-r from-[#5d5661] via-[#6a5c68] to-[#74646f]">
  <svg class="h-[8px] w-[1280px]" viewBox="0 0 1280 8">
    <g fill="#fff" fill-opacity=".12" stroke="#b5acb5" stroke-opacity=".8"><path d="M79.500 9V1.500h57V9M203.500 9V1.500h57V9M451.500 9V1.500h57V9M575.500 9V1.500h57V9"/></g>
    <path d="M513.500 9V1.500h57V9" fill="#fff" fill-opacity=".35" stroke="#fff"/>
    <path d="M41 5l14 1v2H43z" fill="#a9b3b3"/><ellipse cx="108" cy="12" rx="12" ry="8" fill="#d8442f"/>
    <path d="M165 8c4-4 14-8 18-5v3c-5-1-9 0-12 2z" fill="#f2c838"/><path d="M164 8c3-3 6-3 9-3l-3 3z" fill="#4aa3e0"/>
    <path d="M218 6h15v2h-15z" fill="#e3bf55"/><path d="M287 5.500h13V8h-13z" fill="#fff" stroke="#000"/>
    <path d="M344.500 5.500h21V8h-21z" fill="#eef6fc" stroke="#69a7d4"/><path d="M404 5h27v3h-27z" fill="#2d63bd"/>
    <path d="M466.500 6.500h11V8h-11z" fill="#888" stroke="#ccc"/><path d="M478.500 6.500h15V8h-15z" fill="#c79a2b" stroke="#ccc"/>
    <ellipse cx="542" cy="12" rx="14" ry="8" fill="#73c5f2"/><path d="M594 5h22v3h-26z" fill="#d8f0d0" stroke="#3d8c3d"/>
  </svg>
</div>

<script>
const HEAD = "h-[17px] border-r border-b border-[#b1b5ba] bg-[#dfe3e8] p-0 pt-px font-normal text-[#444]";
const CELL = "h-[17px] overflow-hidden whitespace-nowrap border-r border-b border-[#d8dadc] p-0 pt-px";
const BOLD = "h-[17px] overflow-hidden whitespace-nowrap border-r border-b border-[#d8dadc] p-0 pt-px font-bold";
const letters = document.getElementById("letters");
letters.innerHTML = `<th class="${HEAD}"><svg class="ml-auto mr-[4px] size-[9px]" viewBox="0 0 9 9"><path d="M9 0v9H0z" fill="#b4b8be"/></svg></th>` +
  [..."ABCDEFGHIJKLMNOPQR"].map(c => `<th scope="col" class="${HEAD}">${c}</th>`).join("");

const charged = (t, v, a, w, min) => ["1", "2019/4/12 " + t, v, a, w, "0.0Ah/0分钟", `0.4Ah/${min}分钟`, "充电"];
const data = {
  1: ["ID", "记录时间", "电压(V)", "电流(A)", "功率(W)", "放出电量/时长", "充入电量/时长", "状态"],
  2: charged("11:57:00", "14.695", "6.906", "101.4", 3),
  3: charged("11:57:01", "14.695", "6.914", "101.6", 3),
  4: charged("11:57:02", "14.695", "6.904", "101.4", 3),
  37: charged("11:57:35", "14.691", "7.065", "103.7", 4),
  38: charged("11:57:36", "14.693", "7.069", "103.8", 4),
  39: charged("11:57:37", "14.691", "7.073", "103.9", 4),
  40: charged("11:57:38", "14.693", "7.077", "103.9", 4),
  41: charged("11:57:39", "14.693", "7.081", "104", 4),
  42: charged("11:57:40", "14.691", "7.088", "104.1", 4),
  43: charged("11:57:41", "14.693", "7.09", "104.1", 4),
  44: charged("11:57:42", "14.691", "7.096", "104.2", 4)
};
let html = "";
for (let r = 1; r <= 44; r++) {
  html += `<tr><th scope="row" class="${HEAD}">${r}</th>`;
  for (let c = 0; c < 18; c++) html += `<td class="${r === 1 ? BOLD : CELL}">${(data[r] || [])[c] || ""}</td>`;
  html += "</tr>";
}
document.getElementById("rows").innerHTML = html;

const NS = "http://www.w3.org/2000/svg";
const chart = document.getElementById("chart");
function label(text, attrs) {
  const t = document.createElementNS(NS, "text");
  for (const k in attrs) t.setAttribute(k, attrs[k]);
  t.textContent = text;
  chart.appendChild(t);
}
let lines = "";
for (let v = 0; v <= 16; v += 2) {
  const y = Math.round(685.4 - v * 25.62);
  lines += `M55 ${y - 0.5}H1103`;
  label(v, { x: 47, y: y + 4, "text-anchor": "end" });
}
document.getElementById("gridlines").setAttribute("d", lines);
const times = "11:57:00 11:57:22 11:57:44 11:58:06 11:58:28 11:58:50 11:59:12 11:59:34 11:59:56 12:00:20 12:00:42 12:01:04 12:01:26 12:01:48 12:02:10 12:02:32 12:02:54 12:03:16 12:03:38 12:04:00 12:04:22 12:04:44 12:05:06 12:05:28 12:05:50 12:06:12 12:06:34 12:06:56 12:07:18 12:07:40 12:08:02 12:08:24 12:08:46 12:09:12 12:09:37 12:09:59 12:10:22 12:10:44 12:11:06 12:11:28 12:11:50 12:12:12 12:12:34 12:12:56 12:13:25 12:13:47 12:14:09 12:14:31 12:14:53 12:15:15 12:15:37 12:15:59 12:16:21 12:16:43 12:17:05 12:17:27 12:17:50 12:18:16 12:18:38 12:19:00 12:19:22 12:19:44 12:20:06 12:20:28".split(" ");
times.forEach((t, i) => {
  const x = Math.round(66 + i * 16.38);
  label("2019/4/12 " + t, { x: x, y: 801, transform: `rotate(-90 ${x} 801)` });
});
</script>
</body>
</html>
